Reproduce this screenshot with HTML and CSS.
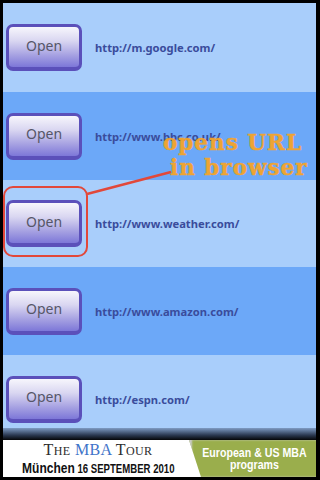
FILE: index.html
```html
<!DOCTYPE html>
<html>
<head>
<meta charset="utf-8">
<link rel="stylesheet" href="styles.css">
</head>
<body>
<div class="screen">
  <div class="list">
    <div class="row light r1"><div class="open">Open</div><span class="url">http://m.google.com/</span></div>
    <div class="row mid r2"><div class="open">Open</div><span class="url">http://www.bbc.co.uk/</span></div>
    <div class="row light r3"><div class="open">Open</div><span class="url">http://www.weather.com/</span></div>
    <div class="row mid r4"><div class="open">Open</div><span class="url">http://www.amazon.com/</span></div>
    <div class="row light r5"><div class="open">Open</div><span class="url">http://espn.com/</span></div>
  </div>
  <div class="shade"></div>
  <div class="ad">
    <div class="ad-left">
      <div class="tour"><span class="sc">T<small>HE</small></span> <span class="mba">MBA</span> <span class="sc">T<small>OUR</small></span></div>
      <div class="date"><span class="city">München</span> 16 SEPTEMBER 2010</div>
    </div>
    <div class="ad-right">
      <div class="prog">European &amp; US MBA<br>programs</div>
    </div>
  </div>
  <div class="highlight"></div>
  <svg class="pointer" width="313" height="474" viewBox="0 0 313 474"><line x1="84" y1="191" x2="168" y2="169" stroke="#e2483a" stroke-width="2.5"/></svg>
  <div class="callout"><div>opens URL</div><div class="l2">in browser</div></div>
</div>
</body>
</html>
```
FILE: styles.css
```css
html, body { margin: 0; padding: 0; background: #000; }
body { width: 320px; height: 480px; overflow: hidden; }
.screen {
  position: relative;
  margin: 3px 4px 3px 3px;
  width: 313px;
  height: 474px;
  display: flex;
  flex-direction: column;
  font-family: "Noto Sans", "Open Sans", sans-serif;
}
.list { height: 425px; overflow: hidden; flex: none; }
.row { display: flex; align-items: center; height: 88px; }
.r1 { height: 89px; }
.r3 { height: 87px; }
.light { background: #a9cefb; }
.mid { background: #6ca8f8; }
.open {
  box-sizing: border-box;
  margin-left: 3px;
  width: 76px;
  height: 47px;
  border: 3px solid #5b50ba;
  border-bottom-width: 4px;
  border-radius: 7px;
  background: linear-gradient(#f7f6fc 0%, #d9d6f1 35%, #a7a2e2 70%, #7d77d8 100%);
  color: #565668;
  font-size: 14px;
  display: flex;
  align-items: center;
  justify-content: center;
  padding-bottom: 4px;
}
.url {
  margin-left: 13px;
  font-size: 11.2px;
  font-weight: bold;
  color: #3a4c9c;
}
.shade { height: 12px; flex: none; background: linear-gradient(#7e9bc4, #2a3850 60%, #050608); }
.ad {
  height: 37px;
  flex: none;
  background: #fff;
  display: flex;
  overflow: hidden;
}
.ad-left { width: 182px; display: flex; flex-direction: column; align-items: center; padding-left: 4px; }
.tour { font-family: "Liberation Serif", serif; font-size: 16px; line-height: 15px; color: #2c2c2c; margin-top: 2px; letter-spacing: 0.4px; }
.tour small { font-size: 12px; }
.mba { color: #3f74c9; }
.date { font-family: "Liberation Sans", sans-serif; font-weight: bold; font-size: 12px; line-height: 16px; color: #111; transform: scaleX(0.8); white-space: nowrap; margin-top: 1px; }
.city { font-size: 15px; }
.ad-right {
  flex: 1;
  background: #9aae4c;
  clip-path: polygon(0 0, 100% 0, 100% 100%, 12px 100%);
  display: flex;
  align-items: center;
  justify-content: center;
  padding-left: 4px;
  box-shadow: inset 3px 0 2px #ccc;
}
.prog { font-family: "Liberation Sans", sans-serif; font-weight: bold; font-size: 12.5px; line-height: 12px; color: #fff; text-align: center; transform: scaleX(0.85); white-space: nowrap; margin-top: 1px; }
.highlight {
  position: absolute;
  left: 0;
  top: 183px;
  width: 85px;
  height: 71px;
  box-sizing: border-box;
  border: 2px solid #e2483a;
  border-radius: 10px;
}
.pointer { position: absolute; left: 0; top: 0; }
.callout {
  position: absolute;
  left: 160px;
  top: 127px;
  font-family: "DejaVu Serif", serif;
  font-weight: bold;
  font-size: 21.5px;
  line-height: 25px;
  color: #f4a42a;
  letter-spacing: 1px;
  -webkit-text-stroke: 0.5px #f4a42a;
  opacity: 0.95;
}
.callout .l2 { margin-left: 7px; }
```
